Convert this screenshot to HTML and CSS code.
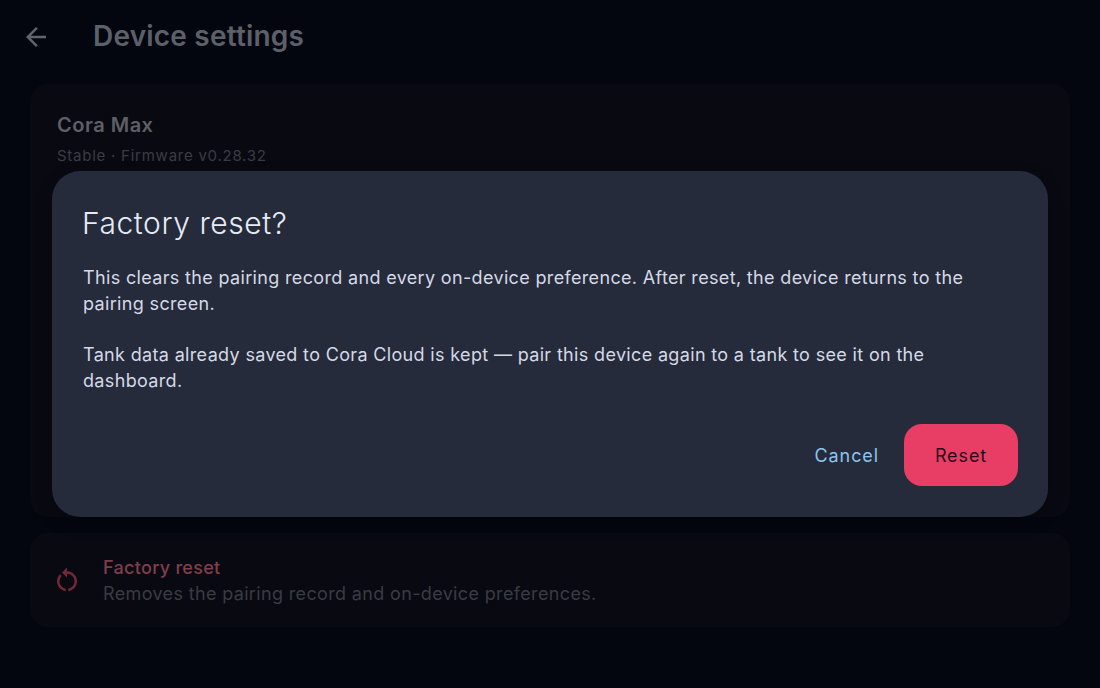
FILE: index.html
```html
<!DOCTYPE html>
<html lang="en">
<head>
    <meta charset="UTF-8">
    <meta name="viewport" content="width=device-width, initial-scale=1.0">
    <title>Device settings</title>
    <link rel="stylesheet" href="styles.css">
</head>
<body>
    <div class="page">
        <div class="app-bar">
            <button class="back-button" aria-label="Back">
                <svg width="30" height="30" viewBox="0 0 24 24" fill="currentColor">
                    <path d="M20 11H7.830l5.590-5.590L12 4l-8 8 8 8 1.410-1.410L7.830 13H20v-2z"/>
                </svg>
            </button>
            <h1 class="page-title">Device settings</h1>
        </div>

        <div class="card device-card">
            <div class="device-name">Cora Max</div>
            <div class="device-meta">Stable · Firmware v0.28.32</div>
        </div>

        <div class="card reset-card">
            <svg class="reset-icon" width="30" height="30" viewBox="0 0 24 24" fill="currentColor">
                <path d="M12 5V2L8 6l4 4V7c3.310 0 6 2.690 6 6 0 2.970-2.170 5.430-5 5.910v2.020c3.950-.49 7-3.850 7-7.930 0-4.420-3.580-8-8-8zm-6 8c0-1.650.67-3.150 1.760-4.240L6.340 7.340C4.900 8.790 4 10.790 4 13c0 4.080 3.050 7.440 7 7.930v-2.020c-2.830-.48-5-2.940-5-5.910z"/>
            </svg>
            <div class="reset-text">
                <div class="reset-title">Factory reset</div>
                <div class="reset-desc">Removes the pairing record and on-device preferences.</div>
            </div>
        </div>
    </div>

    <div class="scrim">
        <div class="dialog">
            <h2 class="dialog-title">Factory reset?</h2>
            <p class="dialog-text">This clears the pairing record and every on-device preference. After reset, the device returns to the pairing screen.</p>
            <p class="dialog-text">Tank data already saved to Cora Cloud is kept — pair this device again to a tank to see it on the dashboard.</p>
            <div class="dialog-actions">
                <button class="btn-cancel">Cancel</button>
                <button class="btn-reset">Reset</button>
            </div>
        </div>
    </div>
</body>
</html>
```

FILE: styles.css
```css
* {
    margin: 0;
    padding: 0;
    box-sizing: border-box;
}

html, body {
    height: 100%;
}

body {
    font-family: Inter, 'Liberation Sans', sans-serif;
    background-color: #03060f;
    overflow: hidden;
}

button {
    font-family: inherit;
    background: none;
    border: none;
}

.page {
    padding: 0 30px;
    display: flex;
    flex-direction: column;
}

.app-bar {
    height: 72px;
    display: flex;
    align-items: center;
    margin-bottom: 12px;
}

.back-button {
    width: 30px;
    height: 30px;
    margin-left: -9px;
    margin-top: 1px;
    color: #60646c;
    display: flex;
}

.page-title {
    margin-left: 42px;
    font-size: 28px;
    font-weight: 600;
    letter-spacing: 0.2px;
    color: #5c6069;
}

.card {
    background-color: #090a11;
    border-radius: 18px;
}

.device-card {
    height: 433px;
    padding: 27px 27px;
    margin-bottom: 16px;
}

.device-name {
    font-size: 20px;
    font-weight: 600;
    line-height: 28px;
    letter-spacing: 0.5px;
    color: #5e5f66;
}

.device-meta {
    margin-top: 7px;
    font-size: 15px;
    line-height: 20px;
    letter-spacing: 0.75px;
    color: #3a3c44;
}

.reset-card {
    height: 94px;
    padding: 0 22px;
    display: flex;
    align-items: center;
    gap: 21px;
}

.reset-icon {
    color: #732838;
}

.reset-text {
    padding-top: 2px;
}

.reset-title {
    font-size: 18px;
    font-weight: 500;
    line-height: 26px;
    letter-spacing: 0.3px;
    color: #803e4c;
}

.reset-desc {
    font-size: 18px;
    line-height: 26px;
    letter-spacing: 0.35px;
    color: #393b44;
}

.scrim {
    position: absolute;
    inset: 0;
}

.dialog {
    position: absolute;
    left: 52px;
    top: 171px;
    width: 996px;
    height: 346px;
    padding: 30px 30px 30px 31px;
    background-color: #252b3b;
    border-radius: 28px;
    box-shadow: 0 6px 16px rgba(0, 0, 0, 0.25);
}

.dialog-title {
    margin-left: -1px;
    font-size: 30px;
    font-weight: 300;
    line-height: 44px;
    letter-spacing: 0.55px;
    color: #e6eaf5;
}

.dialog-text {
    margin-top: 25px;
    font-size: 18px;
    line-height: 26px;
    letter-spacing: 0.34px;
    color: #d5d9e5;
}

.dialog-title + .dialog-text {
    margin-top: 20px;
}

.dialog-actions {
    margin-top: 30px;
    display: flex;
    justify-content: flex-end;
    align-items: center;
    gap: 25px;
}

.btn-cancel {
    font-size: 18px;
    letter-spacing: 0.9px;
    color: #8cc4ec;
}

.btn-reset {
    width: 114px;
    height: 62px;
    border-radius: 18px;
    background-color: #e83e66;
    font-size: 18px;
    letter-spacing: 0.9px;
    color: #2a0a16;
}
```
